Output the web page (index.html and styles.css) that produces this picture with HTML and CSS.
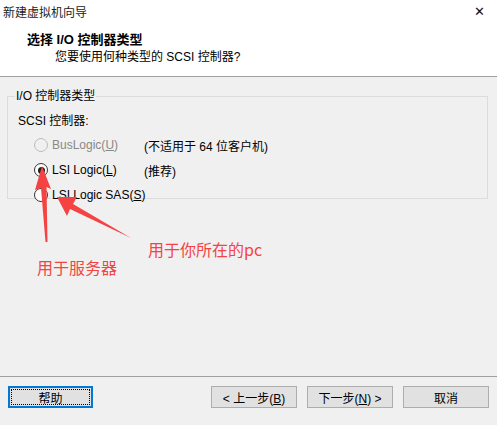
FILE: index.html
```html
<!DOCTYPE html>
<html lang="zh-CN">
<head>
    <meta charset="UTF-8">
    <title>新建虚拟机向导</title>
    <link rel="stylesheet" href="styles.css">
</head>
<body>
    <div class="wizard">
        <div class="header">
            <div class="titlebar">
                <span class="title">新建虚拟机向导</span>
                <span class="close">✕</span>
            </div>
            <div class="heading">选择 I/O 控制器类型</div>
            <div class="subheading">您要使用何种类型的 SCSI 控制器?</div>
        </div>

        <div class="content">
            <fieldset class="group">
                <legend>I/O 控制器类型</legend>
                <div class="label">SCSI 控制器:</div>
                <div class="options">
                    <div class="row disabled">
                        <span class="radio"></span>
                        <span class="name">BusLogic(<u>U</u>)</span>
                        <span class="note">(不适用于 64 位客户机)</span>
                    </div>
                    <div class="row">
                        <span class="radio checked"></span>
                        <span class="name">LSI Logic(<u>L</u>)</span>
                        <span class="note">(推荐)</span>
                    </div>
                    <div class="row">
                        <span class="radio"></span>
                        <span class="name">LSI Logic SAS(<u>S</u>)</span>
                    </div>
                </div>
            </fieldset>
        </div>

        <div class="footer">
            <button class="btn focused">帮助</button>
            <div class="spacer"></div>
            <button class="btn">&lt; 上一步(<u>B</u>)</button>
            <button class="btn">下一步(<u>N</u>) &gt;</button>
            <button class="btn cancel">取消</button>
        </div>

        <!-- red annotations drawn over the dialog -->
        <svg class="marks" width="497" height="425" viewBox="0 0 497 425">
            <polygon points="42,166 51,189 46.5,187 47.5,242 45.5,242 41,188 35,190" fill="#f54343"/>
            <polygon points="57,197 77,197 73,204 131,238 70,209 67,216" fill="#f54343"/>
        </svg>
        <div class="note-mark server">用于服务器</div>
        <div class="note-mark pc">用于你所在的pc</div>
    </div>
</body>
</html>
```

FILE: styles.css
```css
body {
    margin: 0;
    font-family: "Liberation Sans", "Noto Sans CJK SC", sans-serif;
    font-size: 12px;
    color: #000;
    background: #f0f0f0;
}
.wizard {
    position: relative;
    width: 497px;
    height: 425px;
    display: flex;
    flex-direction: column;
}
.header {
    background: #fff;
    height: 76px;
    border-bottom: 1px solid #a0a0a0;
}
.titlebar {
    display: flex;
    justify-content: space-between;
    align-items: center;
    height: 22px;
    padding: 0 12px 0 3px;
}
.title {
    color: #222;
}
.close {
    font-size: 13px;
    color: #111;
}
.heading {
    margin: 10px 0 0 27px;
    font-weight: bold;
    font-size: 13px;
    line-height: 16px;
}
.subheading {
    margin: 1px 0 0 55px;
    line-height: 16px;
}
.content {
    padding: 11px 9px 0 7px;
}
.group {
    margin: 0;
    height: 111px;
    box-sizing: border-box;
    border: 1px solid #dcdcdc;
    padding: 0 0 0 10px;
}
.group legend {
    padding: 0 1px;
    margin-left: -3px;
    line-height: 16px;
}
.label {
    margin-top: 9px;
    line-height: 16px;
}
.options {
    margin-top: 8px;
    display: flex;
    flex-direction: column;
    gap: 9px;
}
.row {
    display: flex;
    align-items: center;
    height: 16px;
    padding-left: 16px;
    white-space: nowrap;
}
.radio {
    flex: none;
    width: 12px;
    height: 12px;
    border: 1px solid #333;
    border-radius: 50%;
    background: #fff;
    margin-right: 4px;
    position: relative;
}
.radio.checked::after {
    content: "";
    position: absolute;
    left: 2.5px;
    top: 2.5px;
    width: 7px;
    height: 7px;
    border-radius: 50%;
    background: #222;
}
.name {
    flex: none;
    min-width: 92px;
}
.disabled .radio {
    border-color: #bcbcbc;
    background: #f0f0f0;
}
.disabled .name {
    color: #888;
}
.footer {
    margin-top: auto;
    border-top: 1px solid #a0a0a0;
    height: 39px;
    display: flex;
    align-items: flex-start;
    padding: 9px 8px 0 8px;
    gap: 10px;
}
.spacer {
    flex: 1;
}
.btn {
    width: 86px;
    height: 22px;
    font-family: inherit;
    font-size: 12px;
    background: #e1e1e1;
    border: 1px solid #adadad;
    padding: 0;
}
.btn.focused {
    width: 85px;
    border: 2px solid #0078d7;
    outline: 1px dotted #000;
    outline-offset: -4px;
}
.marks {
    position: absolute;
    left: 0;
    top: 0;
}
.note-mark {
    position: absolute;
    color: #f54343;
    font-family: "Noto Sans CJK SC", sans-serif;
    font-size: 16px;
    line-height: 20px;
}
.note-mark.server {
    left: 37px;
    top: 257px;
}
.note-mark.pc {
    left: 148px;
    top: 239px;
}
```
